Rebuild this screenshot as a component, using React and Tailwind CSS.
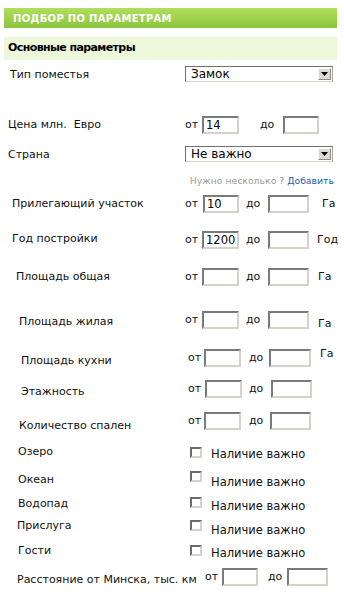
import React from "react";

const Field = ({ className = "", value = "" }) => (
  <input
    readOnly
    defaultValue={value}
    className={
      "h-[18px] shrink-0 border-2 border-t-[#7a7a7a] border-l-[#7a7a7a] border-r-[#d6d2c9] border-b-[#d6d2c9] bg-white pl-[2px] text-[11.5px] leading-[14px] text-black outline-none " +
      className
    }
  />
);

const Select = ({ value }) => (
  <div className="flex h-[16px] w-[148px] items-center border border-t-[#6f6f6f] border-l-[#6f6f6f] border-r-[#a0a0a0] border-b-[#d6d2c9] bg-white">
    <span className="flex-1 pl-[5px] text-[12px] leading-[14px] text-black">{value}</span>
    <span className="mr-[1px] flex h-[12px] w-[13px] items-center justify-center border border-t-[#f7f7f7] border-l-[#f7f7f7] border-r-[#8a8a8a] border-b-[#8a8a8a] bg-[#dedbd3]">
      <svg width="7" height="4" viewBox="0 0 7 4">
        <path d="M0 0h7L3.5 4z" fill="#000" />
      </svg>
    </span>
  </div>
);

const Check = ({ label, rowCls, labelCls, boxCls, textCls }) => (
  <div className={"flex " + rowCls}>
    <div className={"w-[190px] shrink-0 leading-[16px] " + labelCls}>{label}</div>
    <input
      type="checkbox"
      className={
        "h-[11px] w-[12px] shrink-0 appearance-none border-2 border-t-[#6b6b6b] border-l-[#6b6b6b] border-r-[#d6d2c9] border-b-[#d6d2c9] bg-white " +
        boxCls
      }
    />
    <div className={"ml-[9px] text-[11.5px] leading-[16px] " + textCls}>Наличие важно</div>
  </div>
);

export default function App() {
  return (
    <div className="h-[616px] w-[344px] bg-white font-['DejaVu_Sans',sans-serif] text-[11px] text-[#111]">
      <div className="pt-[8px]">
        <div className="ml-[4px] flex h-[20px] w-[333px] items-center bg-gradient-to-b from-[#b2de5c] to-[#8bc43c] pl-[9px] text-[10px] font-bold tracking-[0.3px] text-white">
          ПОДБОР ПО ПАРАМЕТРАМ
        </div>
      </div>

      <div className="ml-[4px] mt-[9px] flex h-[23px] w-[333px] items-center bg-[#edf7d9] pl-[4px] text-[11px] font-bold tracking-[-0.6px] text-black">
        Основные параметры
      </div>

      {/* Тип поместья */}
      <div className="flex h-[50px]">
        <div className="w-[185px] shrink-0 pl-[10px] pt-[7px] leading-[16px]">Тип поместья</div>
        <div className="pt-[6px]">
          <Select value="Замок" />
        </div>
      </div>

      {/* Цена */}
      <div className="flex h-[30px]">
        <div className="w-[185px] shrink-0 pl-[8px] pt-[7px] leading-[16px]">Цена млн.&nbsp; Евро</div>
        <div className="flex h-fit items-center pt-[6px]">
          <span className="w-[17px]">от</span>
          <Field className="w-[37px]" value="14" />
          <span className="ml-[21px] w-[23px]">до</span>
          <Field className="w-[36px]" />
        </div>
      </div>

      {/* Страна */}
      <div className="flex h-[30px]">
        <div className="w-[185px] shrink-0 pl-[8px] pt-[7px] leading-[16px]">Страна</div>
        <div className="pt-[6px]">
          <Select value="Не важно" />
        </div>
      </div>

      <div className="flex h-[20px] justify-end pr-[10px] pt-[4px] text-[9.3px] leading-[14px]">
        <span className="text-[#9b9b9b]">Нужно несколько ?&nbsp;</span>
        <a className="text-[#1c5ca4]">Добавить</a>
      </div>

      {/* Прилегающий участок */}
      <div className="flex h-[35px]">
        <div className="w-[185px] shrink-0 pl-[12px] pt-[6px] leading-[16px]">Прилегающий участок</div>
        <div className="flex h-fit items-center pt-[5px]">
          <span className="w-[18px]">от</span>
          <Field className="w-[36px]" value="10" />
          <span className="ml-[7px] w-[22px]">до</span>
          <Field className="w-[41px]" />
          <span className="ml-[13px]">Га</span>
        </div>
      </div>

      {/* Год постройки */}
      <div className="flex h-[37px]">
        <div className="w-[185px] shrink-0 pl-[12px] pt-[6px] leading-[16px]">Год постройки</div>
        <div className="flex h-fit items-center pt-[6px]">
          <span className="w-[17px]">от</span>
          <Field className="w-[37px]" value="1200" />
          <span className="ml-[7px] w-[22px]">до</span>
          <Field className="w-[41px]" />
          <span className="ml-[8px]">Год</span>
        </div>
      </div>

      {/* Площадь общая */}
      <div className="flex h-[40px]">
        <div className="w-[185px] shrink-0 pl-[16px] pt-[7px] leading-[16px]">Площадь общая</div>
        <div className="flex h-fit items-center pt-[6px]">
          <span className="w-[17px]">от</span>
          <Field className="w-[37px]" />
          <span className="ml-[7px] w-[22px]">до</span>
          <Field className="w-[41px]" />
          <span className="ml-[9px]">Га</span>
        </div>
      </div>

      {/* Площадь жилая */}
      <div className="flex h-[40px]">
        <div className="w-[185px] shrink-0 pl-[19px] pt-[12px] leading-[16px]">Площадь жилая</div>
        <div className="flex h-fit items-center pt-[6px]">
          <span className="w-[17px]">от</span>
          <Field className="w-[37px]" />
          <span className="ml-[7px] w-[22px]">до</span>
          <Field className="w-[41px]" />
          <span className="ml-[9px] mt-[8px]">Га</span>
        </div>
      </div>

      {/* Площадь кухни */}
      <div className="flex h-[34px]">
        <div className="w-[188px] shrink-0 pl-[21px] pt-[11px] leading-[16px]">Площадь кухни</div>
        <div className="flex h-fit items-center pt-[4px]">
          <span className="w-[16px]">от</span>
          <Field className="w-[37px]" />
          <span className="ml-[8px] w-[20px]">до</span>
          <Field className="w-[42px]" />
          <span className="mb-[8px] ml-[9px]">Га</span>
        </div>
      </div>

      {/* Этажность */}
      <div className="flex h-[32px]">
        <div className="w-[188px] shrink-0 pl-[21px] pt-[8px] leading-[16px]">Этажность</div>
        <div className="flex h-fit items-center pt-[4px]">
          <span className="w-[17px]">от</span>
          <Field className="w-[37px]" />
          <span className="ml-[7px] w-[22px]">до</span>
          <Field className="w-[41px]" />
        </div>
      </div>

      {/* Количество спален */}
      <div className="flex h-[34px]">
        <div className="w-[188px] shrink-0 pl-[19px] pt-[10px] leading-[16px]">Количество спален</div>
        <div className="flex h-fit items-center pt-[4px]">
          <span className="w-[16px]">от</span>
          <Field className="w-[37px]" />
          <span className="ml-[8px] w-[21px]">до</span>
          <Field className="w-[41px]" />
        </div>
      </div>

      <Check label="Озеро" rowCls="h-[26px]" labelCls="pl-[18px] pt-[2px]" boxCls="mt-[5px]" textCls="pt-[4px]" />
      <Check label="Океан" rowCls="h-[25px]" labelCls="pl-[18px] pt-[4px]" boxCls="mt-[3px]" textCls="pt-[6px]" />
      <Check label="Водопад" rowCls="h-[23px]" labelCls="pl-[18px] pt-[3px]" boxCls="mt-[4px]" textCls="pt-[5px]" />
      <Check label="Прислуга" rowCls="h-[24px]" labelCls="pl-[17px] pt-[2px]" boxCls="mt-[4px]" textCls="pt-[6px]" />
      <Check label="Гости" rowCls="h-[24px]" labelCls="pl-[18px] pt-[3px]" boxCls="mt-[5px]" textCls="pt-[5px]" />

      {/* Расстояние */}
      <div className="flex h-[30px]">
        <div className="w-[205px] shrink-0 pl-[17px] pt-[8px] leading-[16px]">Расстояние от Минска, тыс. км</div>
        <div className="flex h-fit items-center pt-[4px]">
          <span className="w-[17px]">от</span>
          <Field className="w-[36px]" />
          <span className="ml-[10px] w-[19px]">до</span>
          <Field className="w-[41px]" />
        </div>
      </div>
    </div>
  );
}
